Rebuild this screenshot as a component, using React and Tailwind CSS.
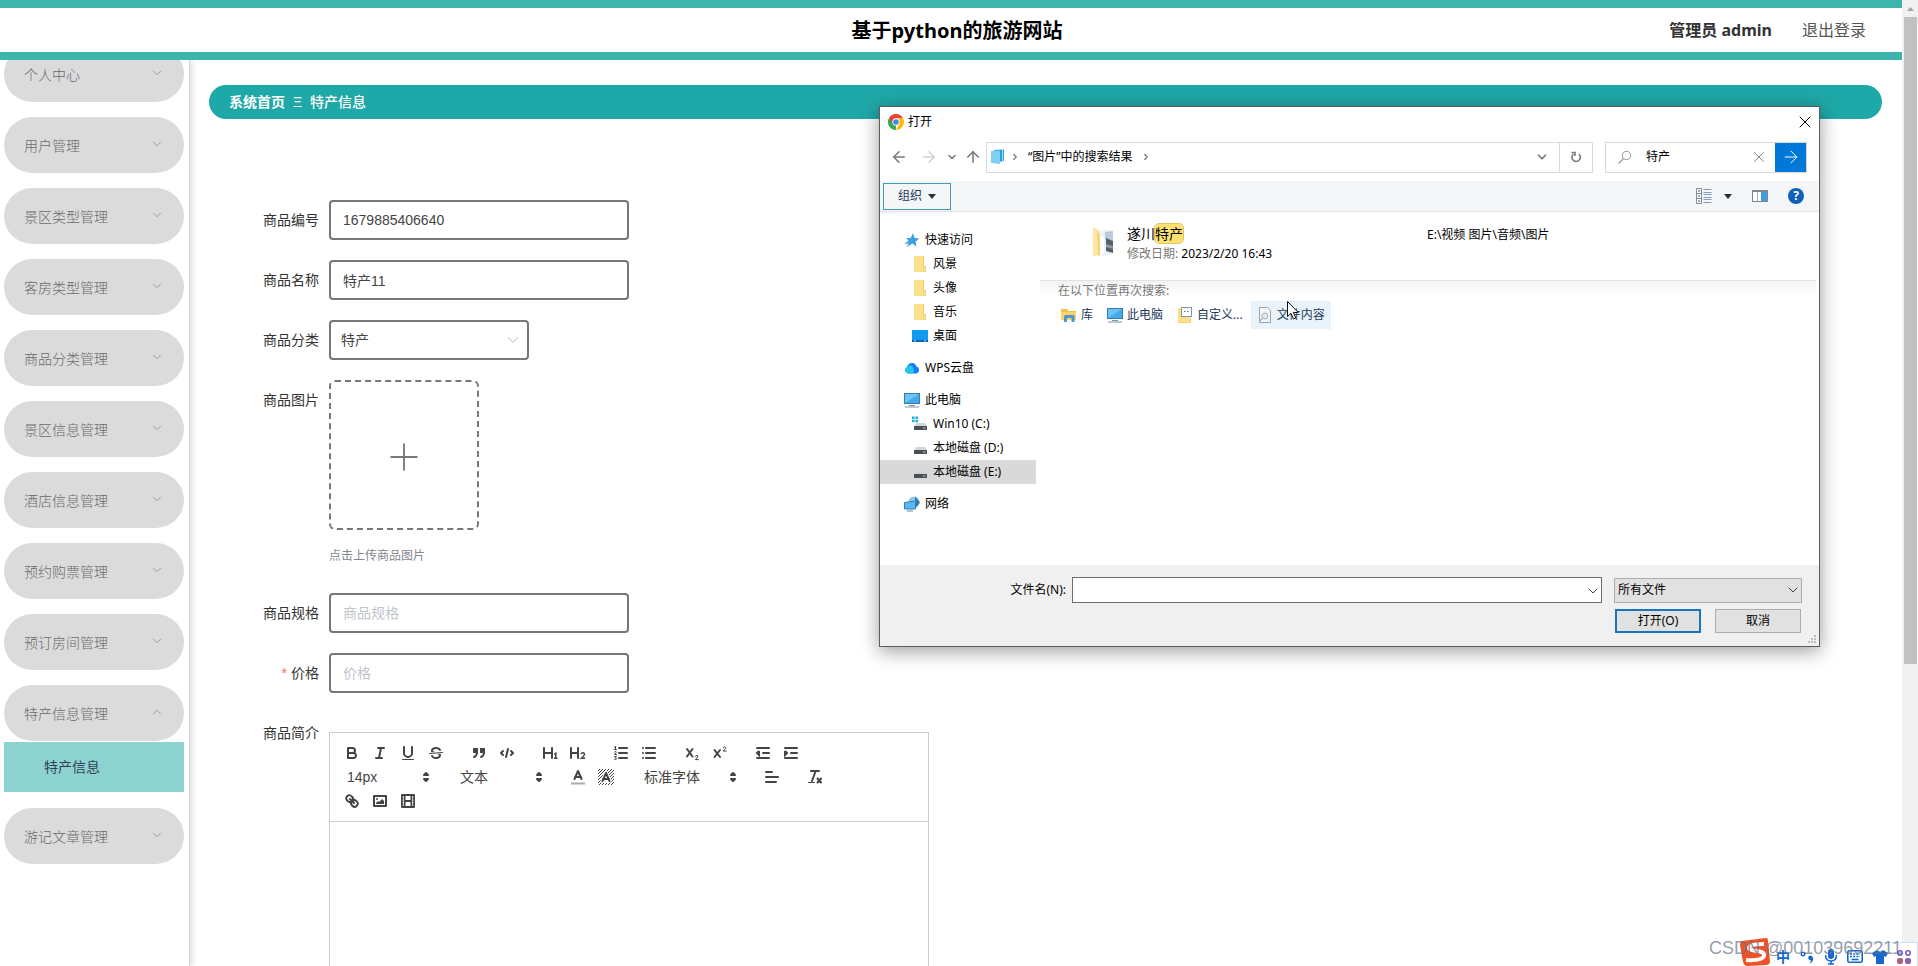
import React, { useState } from "react";
import { ChevronDown, ChevronUp, ChevronRight, ArrowLeft, ArrowRight, ArrowUp, X, Search, Plus } from "lucide-react";

const menus = [
  { name: "个人中心" },
  { name: "用户管理" },
  { name: "景区类型管理" },
  { name: "客房类型管理" },
  { name: "商品分类管理" },
  { name: "景区信息管理" },
  { name: "酒店信息管理" },
  { name: "预约购票管理" },
  { name: "预订房间管理" },
  { name: "特产信息管理", children: ["特产信息"] },
  { name: "游记文章管理" },
];

const Header = () => (
  <header className="relative z-10 flex h-15 shrink-0 items-center border-y-8 border-[#3cb5ad] bg-white pl-3">
    <div className="flex-1 pl-9" />
    <h1 className="pt-0.5 text-xl font-bold text-black">基于python的旅游网站</h1>
    <div className="flex flex-1 items-center justify-end gap-7.5 pr-9 text-base">
      <span className="font-bold text-[#333]">管理员 admin</span>
      <a href="#logout" className="text-[#555]">退出登录</a>
    </div>
  </header>
);

const Sidebar = () => {
  const [opened, setOpened] = useState("特产信息管理");
  return (
    <aside className="w-[190px] shrink-0 border-r border-gray-300 px-1 shadow-[2px_0_6px_rgba(0,0,0,0.15)]">
      {/* the list is scrolled a little under the header */}
      <ul className="-mt-3.5 flex flex-col gap-[15px] pr-px">
        {menus.map((m) => {
          const isOpen = opened === m.name && m.children;
          return (
            <li key={m.name}>
              <button
                onClick={() => setOpened(isOpen ? "" : m.name)}
                className="flex h-14 w-full items-center justify-between rounded-full bg-[#dbdbdb] px-5 pt-0.5 text-sm font-light text-[#6a6a6a]"
              >
                {m.name}
                {isOpen ? (
                  <ChevronUp size={14} strokeWidth={1.5} className="mb-1 text-[#909399]" />
                ) : (
                  <ChevronDown size={14} strokeWidth={1.5} className="mb-1 text-[#909399]" />
                )}
              </button>
              {isOpen &&
                m.children.map((c) => (
                  <a key={c} href="#goods" className="my-px flex h-[50px] items-center bg-[#8dd3d0] pl-10 text-sm text-[#304156]">
                    {c}
                  </a>
                ))}
            </li>
          );
        })}
      </ul>
    </aside>
  );
};

const inputCls =
  "h-10 w-[300px] rounded border-2 border-[#777] bg-white px-3 text-sm text-[#444] outline-none placeholder:text-[#c0c4cc]";

const FormItem = ({ label, id, required, children }) => (
  <div className="flex items-start gap-2.5">
    <label htmlFor={id} className="w-20 shrink-0 text-right text-sm leading-10 text-[#333]">
      {required && <span className="mr-1 text-red-400">*</span>}
      {label}
    </label>
    {children}
  </div>
);

// editor toolbar drawings, 18x18 boxes
const S = "fill-none stroke-[#444] stroke-2 [stroke-linecap:round] [stroke-linejoin:round]";
const T = "fill-none stroke-[#444] stroke-1 [stroke-linecap:round] [stroke-linejoin:round]";
const F = "fill-[#444]";

const icons = {
  bold: (
    <>
      <path className={S} d="M5,4H9.5A2.5,2.5,0,0,1,12,6.5v0A2.5,2.5,0,0,1,9.5,9H5A0,0,0,0,1,5,9V4A0,0,0,0,1,5,4Z" />
      <path className={S} d="M5,9h5.5A2.5,2.5,0,0,1,13,11.5v0A2.5,2.5,0,0,1,10.5,14H5a0,0,0,0,1,0,0V9A0,0,0,0,1,5,9Z" />
    </>
  ),
  italic: (
    <>
      <line className={S} x1="7" x2="13" y1="4" y2="4" />
      <line className={S} x1="5" x2="11" y1="14" y2="14" />
      <line className={S} x1="8" x2="10" y1="14" y2="4" />
    </>
  ),
  underline: (
    <>
      <path className={S} d="M5,3V9a4.012,4.012,0,0,0,4,4H9a4.012,4.012,0,0,0,4-4V3" />
      <rect className={F} height="1" rx="0.5" ry="0.5" width="12" x="3" y="15" />
    </>
  ),
  strike: (
    <>
      <line className={T} x1="15.5" x2="2.5" y1="8.5" y2="9.5" />
      <path className={F} d="M9.007,8C6.542,7.791,6,7.519,6,6.5,6,5.792,7.283,5,9,5c1.571,0,2.765.679,2.969,1.309a1,1,0,0,0,1.9-.617C13.356,4.106,11.354,3,9,3,6.2,3,4,4.538,4,6.5a3.2,3.2,0,0,0,.5,1.843Z" />
      <path className={F} d="M8.984,10C11.457,10.208,12,10.479,12,11.5c0,0.708-1.283,1.5-3,1.5-1.571,0-2.765-.679-2.969-1.309a1,1,0,1,0-1.9.617C4.644,13.894,6.646,15,9,15c2.8,0,5-1.538,5-3.5a3.2,3.2,0,0,0-.5-1.843Z" />
    </>
  ),
  quote: (
    <>
      <rect className="fill-[#444] stroke-[#444] stroke-2" height="3" width="3" x="4" y="5" />
      <rect className="fill-[#444] stroke-[#444] stroke-2" height="3" width="3" x="11" y="5" />
      <path className={S} d="M7,8c0,4.031-3,5-3,5" />
      <path className={S} d="M14,8c0,4.031-3,5-3,5" />
    </>
  ),
  code: (
    <>
      <polyline className={S} points="5 7 3 9 5 11" />
      <polyline className={S} points="13 7 15 9 13 11" />
      <line className={S} x1="10" x2="8" y1="5" y2="13" />
    </>
  ),
  h1: (
    <>
      <path className={S} d="M3,4V14M11,4V14M3,9H11" />
      <path className="fill-none stroke-[#444] stroke-[1.5]" d="M13.2,10.3L14.8,9.2V14.2M13,14.2H16.4" />
    </>
  ),
  h2: (
    <>
      <path className={S} d="M2,4V14M9,4V14M2,9H9" />
      <path className="fill-none stroke-[#444] stroke-[1.5]" d="M12,10Q12.5,8.7 14,8.8Q15.8,9 15.4,10.6Q15,12 12.4,14.2H16.2" />
    </>
  ),
  ordered: (
    <>
      <path className={S} d="M7,4H15M7,9H15M7,14H15" />
      <path className={T} d="M2.5,3L3.5,2.5V5.5M2.5,5.5H4.5M2.5,8C3,7 4.5,7.2 4.3,8.4L2.5,10.5H4.5M2.5,12.6H4.4L3.4,14Q5,14.3 4.2,15.3Q3.4,15.9 2.5,15.3" />
    </>
  ),
  bullet: <path className={S} d="M6,4H15M6,9H15M6,14H15M3,4V4M3,9V9M3,14V14" />,
  sub: (
    <>
      <path className={S} d="M4,5L9.5,12.5M9.5,5L4,12.5" />
      <path className={T} d="M12.4,12.4Q12.8,11.3 14,11.4Q15.3,11.7 14.8,13L12.4,15.6H15.4" />
    </>
  ),
  sup: (
    <>
      <path className={S} d="M3.5,6L9,13M9,6L3.5,13" />
      <path className={T} d="M12.2,3.9Q12.6,2.8 13.8,2.9Q15.1,3.2 14.6,4.5L12.2,7.1H15.2" />
    </>
  ),
  outdent: (
    <>
      <path className={S} d="M3,14H15M3,4H15M9,9H15" />
      <polyline className="fill-[#444] stroke-[#444] stroke-2" points="5 7 5 11 3 9 5 7" />
    </>
  ),
  indent: (
    <>
      <path className={S} d="M3,14H15M3,4H15M9,9H15" />
      <polyline className="fill-[#444] stroke-[#444] stroke-2" points="3 7 3 11 5 9 3 7" />
    </>
  ),
  color: (
    <>
      <line className="stroke-[#aaa] stroke-2" x1="2" x2="16" y1="15.5" y2="15.5" />
      <polyline className={S} points="5.5 11 9 3 12.5 11" />
      <line className={S} x1="11.63" x2="6.38" y1="9" y2="9" />
    </>
  ),
  background: (
    <>
      <path
        className="fill-none stroke-[#444] stroke-1"
        d="M1,3L3,1M1,6L6,1M1,9L9,1M1,12L12,1M1,15L15,1M2,17L17,2M5,17L17,5M8,17L17,8M11,17L17,11M14,17L17,14"
      />
      <path className="fill-white stroke-white stroke-4 [stroke-linejoin:round]" d="M5.5,13L9,5L12.5,13Z" />
      <polyline className={S} points="5.5 13 9 5 12.5 13" />
      <line className={S} x1="11.63" x2="6.38" y1="11" y2="11" />
    </>
  ),
  align: <path className={S} d="M3,9H15M3,14H13M3,4H9" />,
  clean: (
    <>
      <path className={S} d="M5,3H13M6,13L9.5,3.5M11.5,10.5L15,14.5M15,10.5L11.5,14.5" />
      <rect className={F} height="1" rx="0.5" width="7" x="2" y="14" />
    </>
  ),
  link: (
    <>
      <line className={S} x1="7" x2="11" y1="7" y2="11" />
      <path className={S} d="M8.9,4.577a3.476,3.476,0,0,1,.36,4.679A3.476,3.476,0,0,1,4.577,8.9C3.185,7.5,2.035,6.4,4.217,4.217S7.5,3.185,8.9,4.577Z" />
      <path className={S} d="M13.423,9.1a3.476,3.476,0,0,0-4.679-.36,3.476,3.476,0,0,0,.36,4.679c1.392,1.392,2.5,2.542,4.679.36S14.815,10.5,13.423,9.1Z" />
    </>
  ),
  image: (
    <>
      <rect className={S} height="10" width="12" x="3" y="4" />
      <circle className={F} cx="6" cy="7" r="1" />
      <polyline className={F} points="5 12 5 11 7 9 8 10 11 7 13 9 13 12 5 12" />
    </>
  ),
  video: (
    <>
      <rect className={S} height="12" width="12" x="3" y="3" />
      <path className={S} d="M5.5,3V15M12.5,3V15M6,9H12" />
      <path className="stroke-white stroke-1" d="M3.5,5H5M3.5,8H5M3.5,10.5H5M3.5,13H5M13,5H14.5M13,8H14.5M13,10.5H14.5M13,13H14.5" />
    </>
  ),
};

const Tools = ({ names }) => (
  <span className="mr-[15px] flex">
    {names.map((n) => (
      <button key={n} type="button" aria-label={n} className="flex h-6 w-7 items-center justify-center">
        <svg viewBox="0 0 18 18" className="size-[18px]">{icons[n]}</svg>
      </button>
    ))}
  </span>
);

const Picker = ({ value, label, wide }) => (
  <span className={`relative mr-[15px] flex h-6 items-center ${wide ? "w-[108px]" : "w-[98px]"}`}>
    <select aria-label={label} className="w-full appearance-none pl-[9px] text-sm text-[#444] outline-none">
      <option>{value}</option>
    </select>
    <svg viewBox="0 0 18 18" className="pointer-events-none absolute right-px size-[18px]">
      <polygon className="fill-[#444] stroke-[#444] stroke-2 [stroke-linejoin:round]" points="7 11 9 13 11 11 7 11" />
      <polygon className="fill-[#444] stroke-[#444] stroke-2 [stroke-linejoin:round]" points="7 7 9 5 11 7 7 7" />
    </svg>
  </span>
);

const Editor = () => (
  <div className="flex h-[480px] w-[600px] flex-col border border-[#ccc]">
    <div className="border-b border-[#ccc] p-2">
      <div className="flex">
        <Tools names={["bold", "italic", "underline", "strike"]} />
        <Tools names={["quote", "code"]} />
        <Tools names={["h1", "h2"]} />
        <Tools names={["ordered", "bullet"]} />
        <Tools names={["sub", "sup"]} />
        <Tools names={["outdent", "indent"]} />
      </div>
      <div className="flex">
        <Picker value="14px" label="字号" />
        <Picker value="文本" label="标题" />
        <Tools names={["color", "background"]} />
        <Picker value="标准字体" label="字体" wide />
        <Tools names={["align"]} />
        <Tools names={["clean"]} />
      </div>
      <div className="flex">
        <Tools names={["link", "image", "video"]} />
      </div>
    </div>
    <textarea id="intro" className="flex-1 resize-none p-3 text-sm outline-none" />
  </div>
);

const GoodsForm = () => (
  <form className="mt-[81px] ml-[30px] flex flex-col gap-5">
    <FormItem label="商品编号" id="code">
      <input id="code" className={inputCls} defaultValue="1679885406640" />
    </FormItem>
    <FormItem label="商品名称" id="name">
      <input id="name" className={inputCls} defaultValue="特产11" />
    </FormItem>
    <FormItem label="商品分类" id="type">
      <div className="relative">
        <select id="type" className="h-10 w-[200px] appearance-none rounded border-2 border-[#777] bg-white px-2.5 text-sm text-[#444] outline-none">
          <option>特产</option>
        </select>
        <ChevronDown size={20} strokeWidth={1.2} className="pointer-events-none absolute top-2.5 right-1.5 text-[#b4b8c0]" />
      </div>
    </FormItem>
    <FormItem label="商品图片" id="picture">
      <div>
        <button
          type="button"
          id="picture"
          className="flex size-[150px] items-center justify-center rounded-md border-2 border-dashed border-[#777] pt-1 text-[#777]"
        >
          <Plus size={44} strokeWidth={1} />
        </button>
        <p className="mt-[17px] mb-2 text-xs leading-[18px] text-[#83878f]">点击上传商品图片</p>
      </div>
    </FormItem>
    <FormItem label="商品规格" id="spec">
      <input id="spec" className={inputCls} placeholder="商品规格" />
    </FormItem>
    <FormItem label="价格" id="price" required>
      <input id="price" className={inputCls} placeholder="价格" />
    </FormItem>
    <FormItem label="商品简介" id="intro">
      <div className="pt-[19px]">
        <Editor />
      </div>
    </FormItem>
  </form>
);

/* ---------- file dialog ---------- */

const ChromeIcon = () => (
  <svg viewBox="0 0 48 48" className="size-4">
    <path fill="#34a853" d="M24 24L24 48A24 24 0 0 1 3.2 12Z" />
    <path fill="#ea4335" d="M24 13H45.3A24 24 0 0 0 3.2 12L14 30Z" />
    <path fill="#fbbc04" d="M24 13H45.3A24 24 0 0 1 24 48L34 29Z" />
    <circle cx="24" cy="24" r="11" fill="#fff" />
    <circle cx="24" cy="24" r="8.5" fill="#4285f4" />
  </svg>
);

const PcIcon = () => (
  <svg viewBox="0 0 16 16" className="size-4">
    <rect x="0.5" y="1.5" width="15" height="10" fill="#6cc3f7" stroke="#3a7ca8" />
    <path d="M1 11L15 2V11Z" fill="#44aaeb" />
    <path d="M5 13.5H11M1 15H15" stroke="#7d97a6" />
  </svg>
);

const FolderIcon = () => (
  <svg viewBox="0 0 16 16" className="size-4">
    <path d="M2 0H12V10H14V16H2Z" fill="#fbe08a" />
    <path d="M12 0V10H14V16H11.5V9.5H11V0Z" fill="#efc968" />
    <rect x="12" y="10.5" width="1.5" height="5" fill="#fbe08a" />
  </svg>
);

const StarIcon = () => (
  <svg viewBox="0 0 16 16" className="size-4">
    <path d="M9 1L10.5 6L15.5 6.5L11.5 9.5L12.5 14.5L8.3 11.6L3 15L4.5 11H1L4.5 9L2.5 6L6.7 6Z" fill="#3c9fe0" />
    <path d="M0.5 11.5H4.5M2.5 13.5H5" stroke="#8fc4ea" />
  </svg>
);

const DesktopIcon = () => (
  <svg viewBox="0 0 16 16" className="size-4">
    <rect x="0" y="2" width="16" height="12" fill="#0f9bf2" />
    <rect x="0" y="12" width="16" height="2" fill="#0a66ad" />
    <path d="M2 13H4M12 13H14" stroke="#cfe9fb" />
  </svg>
);

const CloudIcon = () => (
  <svg viewBox="0 0 16 16" className="size-4">
    <path d="M4 13.5A3.5 3.5 0 0 1 3 7Q4.5 2.8 8.5 3Q11.5 3.2 12.4 6.5A3.6 3.6 0 0 1 12 13.5Z" fill="#1a7cf5" />
    <path d="M4 13.5A3.5 3.5 0 0 1 3 7Q5 4 8 6Q11 9 9 13.5Z" fill="#22c7ee" />
  </svg>
);

const DiskIcon = ({ win }) => (
  <svg viewBox="0 0 16 16" className="size-4">
    {win && <path d="M0 0.5H2.6V3H0ZM3.4 0.5H6V3H3.4ZM0 3.8H2.6V6.3H0ZM3.4 3.8H6V6.3H3.4Z" fill="#22b0e0" />}
    <path d="M4 7H13L15 10.5H2Z" fill="#d2d5d7" />
    <rect x="2" y="10" width="13" height="4" rx="0.5" fill="#4b4f52" />
    <path d="M11 12H13.5" stroke="#b9c4c4" />
  </svg>
);

const NetIcon = () => (
  <svg viewBox="0 0 16 16" className="size-4">
    <circle cx="10" cy="6" r="5.5" fill="#8cc6e8" />
    <path d="M11 0.5L16 6.5L11 13Z" fill="#2d7cae" />
    <path d="M0.5 6.5L11.5 5V13H0.5Z" fill="#56b9f1" stroke="#3480b0" />
    <path d="M3 15H9" stroke="#5a8fae" />
  </svg>
);

const LibraryIcon = () => (
  <svg viewBox="0 0 16 16" className="size-4">
    <path d="M0 2H6L7.5 4H15V13H0Z" fill="#f3bf48" />
    <path d="M0 5H15V13H0Z" fill="#fbd467" />
    <path d="M3 15V9.5Q3 8 4.5 8H12Q13.5 8 13.5 9.5V15H10.5V11H6V15Z" fill="#4a96d6" />
  </svg>
);

const CustomIcon = () => (
  <svg viewBox="0 0 16 16" className="size-4">
    <path d="M1 1H4V15H13V11H14V16H1Z" fill="#f3cf6d" />
    <rect x="1" y="1" width="12" height="14" fill="#fbe08a" />
    <rect x="4.5" y="0.5" width="10" height="9" fill="#fff" stroke="#7f95a8" />
    <path d="M7 4.5H8.5M10 4.5H11.5" stroke="#3e78c0" />
  </svg>
);

const DocIcon = () => (
  <svg viewBox="0 0 16 16" className="size-4">
    <path d="M2.5 0.5H10.5L13.5 3.5V15.5H2.5Z" fill="#f4f6f8" stroke="#9aa3ab" />
    <circle cx="7.8" cy="9" r="3" fill="#dce9f2" stroke="#a6b4bf" />
    <path d="M5.5 11.2L2.5 14.5" stroke="#a6b4bf" strokeWidth="1.5" />
  </svg>
);

const tree = [
  [
    { name: "快速访问", icon: <StarIcon /> },
    { name: "风景", icon: <FolderIcon />, sub: true },
    { name: "头像", icon: <FolderIcon />, sub: true },
    { name: "音乐", icon: <FolderIcon />, sub: true },
    { name: "桌面", icon: <DesktopIcon />, sub: true },
  ],
  [{ name: "WPS云盘", icon: <CloudIcon /> }],
  [
    { name: "此电脑", icon: <PcIcon /> },
    { name: "Win10 (C:)", icon: <DiskIcon win />, sub: true },
    { name: "本地磁盘 (D:)", icon: <DiskIcon />, sub: true },
    { name: "本地磁盘 (E:)", icon: <DiskIcon />, sub: true, active: true },
  ],
  [{ name: "网络", icon: <NetIcon /> }],
];

const places = [
  { name: "库", icon: <LibraryIcon /> },
  { name: "此电脑", icon: <PcIcon /> },
  { name: "自定义...", icon: <CustomIcon /> },
  { name: "文件内容", icon: <DocIcon />, hover: true },
];

const Caret = () => (
  <svg viewBox="0 0 8 5" className="h-[5px] w-2">
    <path d="M0 0H8L4 5Z" fill="#2d2d3a" />
  </svg>
);

const Cursor = () => (
  <svg viewBox="0 0 12 19" className="absolute top-0 left-9 h-[19px] w-3">
    <path d="M0.5 0.5V15.5L4 12.3L6.5 18L8.8 17L6.4 11.5H11.3Z" fill="#fff" stroke="#111" />
  </svg>
);

const FileDialog = () => (
  <section
    role="dialog"
    aria-label="打开"
    className="absolute top-[106px] left-[879px] z-20 flex w-[941px] flex-col border border-[#5c5c5c] bg-white text-xs text-black shadow-[0_4px_18px_rgba(0,0,0,0.4)]"
  >
    <div className="flex h-[30px] items-center gap-1 pr-1 pl-2">
      <ChromeIcon />
      <span className="flex-1">打开</span>
      <button aria-label="关闭"><X size={20} strokeWidth={1.2} /></button>
    </div>

    <div className="flex h-11 items-center pr-3 pb-1 pl-2.5 text-[#777]">
      <button aria-label="后退"><ArrowLeft size={18} strokeWidth={2} /></button>
      <button aria-label="前进" className="ml-3 text-[#d0d0d0]"><ArrowRight size={18} strokeWidth={1.8} /></button>
      <button aria-label="最近" className="ml-2"><ChevronDown size={12} strokeWidth={3} /></button>
      <button aria-label="上移" className="ml-1.5"><ArrowUp size={18} strokeWidth={2} /></button>
      <div className="ml-1 flex h-[31px] flex-1 items-center border border-[#d9d9d9] pl-[3px]">
        <svg viewBox="0 0 16 16" className="size-4">
          <path d="M4 1L14 0.5V12L4 14Z" fill="#2b9fdc" />
          <path d="M1 2L10 1.5V15L1 14Z" fill="#7fd0f5" />
          <path d="M12.5 1V13" stroke="#a7ddf7" />
        </svg>
        <ChevronRight size={10} strokeWidth={3} className="ml-1" />
        <span className="ml-2 text-black">“图片”中的搜索结果</span>
        <ChevronRight size={10} strokeWidth={3} className="ml-2" />
        <button aria-label="展开" className="ml-auto px-2.5"><ChevronDown size={14} strokeWidth={3} /></button>
        <button aria-label="刷新" className="flex h-full w-[33px] items-center justify-center border-l border-[#d9d9d9]">
          <svg viewBox="0 0 12 12" className="size-3">
            <path d="M9 3.2A4.2 4.2 0 1 1 3.5 3M1.5 1.5H5V5" fill="none" stroke="currentColor" strokeWidth="1.6" />
          </svg>
        </button>
      </div>
      <div className="ml-3 flex h-[31px] w-[202px] items-center border border-[#d9d9d9] pl-3">
        <svg viewBox="0 0 14 14" className="size-3.5">
          <path d="M0.5 13.5L5.5 8.5" stroke="#999" strokeWidth="1.2" />
          <circle cx="8.5" cy="5.5" r="4.2" fill="none" stroke="#999" />
        </svg>
        <input aria-label="搜索" defaultValue="特产" className="ml-3.5 w-0 flex-1 text-black outline-none" />
        <button aria-label="清除"><X size={18} strokeWidth={1.2} /></button>
        <button aria-label="转到" className="ml-[7px] flex h-full w-[31px] items-center justify-center bg-[#0078d7] text-white">
          <ArrowRight size={20} strokeWidth={1.2} />
        </button>
      </div>
    </div>

    <div className="flex h-[31px] items-center border-b border-[#e2e3e4] bg-[#f4f6f7] px-[3px] text-[#1e395b]">
      <button className="flex h-[27px] w-[68px] items-center justify-center gap-1.5 border border-[#3f9dbb]">
        组织 <Caret />
      </button>
      <button aria-label="视图" className="ml-auto flex items-center gap-3">
        <svg viewBox="0 0 16 16" className="size-4">
          <path d="M0.5 0.5H5.5V15.5H0.5ZM0.5 5.5H5.5M0.5 10.5H5.5" fill="none" stroke="#8a8f96" />
          <path d="M2 3H4M2 8H4M2 13H4" stroke="#6a6f76" />
          <path d="M7.5 1.5H15.5M7.5 4.5H15.5M7.5 6.5H15.5M7.5 9.5H15.5M7.5 11.5H15.5M7.5 14.5H15.5" stroke="#7f9bc0" />
        </svg>
        <Caret />
      </button>
      <button aria-label="预览窗格" className="ml-5">
        <svg viewBox="0 0 16 12" className="h-3 w-4">
          <rect x="0.5" y="0.5" width="15" height="11" fill="#fff" stroke="#7b868f" />
          <path d="M0 1.5H16" stroke="#7b868f" />
          <rect x="9" y="2" width="6" height="9" fill="#3f9be0" />
          <path d="M5.5 2V11" stroke="#9fb0bb" />
        </svg>
      </button>
      <button aria-label="帮助" className="mr-3 ml-5 flex size-4 items-center justify-center rounded-full bg-[#1160b8] font-bold text-white">?</button>
    </div>

    <div className="flex h-[353px]">
      <nav className="mt-4 flex w-[156px] flex-col gap-2">
        {tree.map((group, i) => (
          <ul key={i}>
            {group.map((n) => (
              <li key={n.name}>
                <button
                  className={`flex h-6 w-full items-center gap-[5px] text-left ${n.sub ? "pl-8" : "pl-6"} ${n.active ? "bg-[#d9d9d9]" : ""}`}
                >
                  {n.icon}
                  {n.name}
                </button>
              </li>
            ))}
          </ul>
        ))}
      </nav>

      <div className="ml-1 flex-1 pr-[3px]">
        <div className="flex h-[68px] items-start pt-[11px] pl-[51px]">
          <svg viewBox="0 0 26 32" className="mt-[3px] h-8 w-[26px]">
            <path d="M8 4H22V28L9 30Z" fill="#edf2f7" />
            <path d="M14 6L22 5V15L14 13Z" fill="#b9cbdc" />
            <path d="M15 12L22 15V27L15 25Z" fill="#56606a" />
            <path d="M15 18L22 20V23L15 21Z" fill="#8d99a4" />
            <path d="M2 2L6 3L9 9V29L2 30Z" fill="#fbe7a0" />
            <path d="M6 3L9 9V29L7 30Z" fill="#f3d37a" />
            <path d="M9 9L13 12V27L9 30Z" fill="#fff" />
          </svg>
          <div className="ml-2.5 w-[300px]">
            <p className="text-sm leading-[21px]">
              遂川<mark className="rounded bg-[#fde271] outline outline-[#e4c55c]">特产</mark>
            </p>
            <p className="leading-5"><span className="text-[#777]">修改日期:</span> 2023/2/20 16:43</p>
          </div>
          <p className="leading-6">E:\视频 图片\音频\图片</p>
        </div>
        <div className="border-t border-[#e3e3e3] bg-linear-to-b from-[#f3f3f3] to-white to-[14px] pl-[15px]">
          <p className="px-[3px] leading-5 text-[#777]">在以下位置再次搜索:</p>
          <div className="flex">
            {places.map((p) => (
              <button
                key={p.name}
                className={`relative mr-0.5 flex h-7 items-center gap-1 px-1.5 text-[#1e395b] ${p.hover ? "bg-[#e8f3fc]" : ""}`}
              >
                {p.icon}
                {p.name}
                {p.hover && <Cursor />}
              </button>
            ))}
          </div>
        </div>
      </div>
    </div>

    <div className="relative bg-[#f0f0f0] px-[17px] pt-3 pb-[13px]">
      <div className="flex items-center">
        <label htmlFor="filename" className="w-[175px] pr-1.5 text-right">文件名(N):</label>
        <div className="relative flex-1">
          <input id="filename" className="h-[26px] w-full border border-[#6f6f6f] bg-white px-2 outline-none" />
          <ChevronDown size={16} strokeWidth={1.5} className="pointer-events-none absolute top-1.5 right-px text-[#444]" />
        </div>
        <div className="relative ml-3 w-[188px]">
          <select aria-label="文件类型" className="h-[25px] w-full appearance-none border border-[#adadad] bg-[#e1e1e1] pl-[3px] outline-none">
            <option>所有文件</option>
          </select>
          <ChevronDown size={16} strokeWidth={1.5} className="pointer-events-none absolute top-1 right-px text-[#444]" />
        </div>
      </div>
      <div className="mt-1.5 flex justify-end gap-3.5 pr-px">
        <button className="h-6 w-[86px] border-2 border-[#1874bd] bg-[#e1e1e1]">打开(O)</button>
        <button className="h-6 w-[86px] border border-[#adadad] bg-[#e1e1e1]">取消</button>
      </div>
      <svg viewBox="0 0 9 9" className="absolute right-0.5 bottom-0.5 size-[9px]">
        <path d="M6 0H8V2H6ZM6 3H8V5H6ZM6 6H8V8H6ZM3 3H5V5H3ZM3 6H5V8H3ZM0 6H2V8H0Z" fill="#bdbdbd" />
      </svg>
    </div>
  </section>
);

const ImeBar = () => (
  <div className="absolute right-0 bottom-0 z-30 flex h-[27px] items-end text-[#1268cf]">
    <svg viewBox="0 0 30 28" className="h-7 w-[30px]">
      <path d="M2 3L26 0Q28 0 28 3L30 23Q30 27 26 27L8 28Q4 28 3 24L0 7Q0 3 2 3Z" fill="#ee5328" />
      <path d="M24 6Q9 6 9 10Q9 12 17 13Q25 14 24 18Q22 23 6 22" fill="none" stroke="#fff" strokeWidth="4" />
    </svg>
    <div className="flex h-6 items-center gap-[9px] border-t border-r border-[#cfe0f2] bg-white pt-1 pr-1.5 pl-1.5">
      <span className="text-sm font-bold">中</span>
      <svg viewBox="0 0 16 16" className="size-4">
        <circle cx="4" cy="5" r="1.8" fill="none" stroke="currentColor" strokeWidth="1.4" />
        <path d="M11 6.5A2.2 2.2 0 1 0 12 11Q12 13 10 14.5Q14.5 13.5 14 9Q13 6 11 6.5Z" fill="currentColor" />
      </svg>
      <svg viewBox="0 0 14 16" className="h-4 w-3.5">
        <rect x="4" y="0" width="6" height="10" rx="3" fill="currentColor" />
        <path d="M1.5 6Q1.5 12 7 12Q12.5 12 12.5 6M7 12V15M4 15H10" fill="none" stroke="currentColor" strokeWidth="1.5" />
      </svg>
      <svg viewBox="0 0 16 13" className="h-[13px] w-4">
        <rect x="0.8" y="0.8" width="14.4" height="11.4" rx="1.5" fill="none" stroke="currentColor" strokeWidth="1.6" />
        <path d="M3 4H13M3 6.5H13" stroke="currentColor" strokeWidth="1.6" strokeDasharray="2 1.2" />
        <path d="M4.5 9.5H11.5" stroke="currentColor" strokeWidth="1.6" />
      </svg>
      <svg viewBox="0 0 16 14" className="h-3.5 w-4">
        <path d="M0 3L5 0Q8 3 11 0L16 3L14 7L12 6V14H4V6L2 7Z" fill="currentColor" />
      </svg>
      <svg viewBox="0 0 14 14" className="size-3.5">
        <circle cx="3" cy="3" r="2.2" fill="none" stroke="#6a5acd" strokeWidth="1.6" />
        <circle cx="11" cy="3" r="2.2" fill="none" stroke="#7a5cc4" strokeWidth="1.6" />
        <rect x="0" y="8" width="6" height="6" rx="2" fill="#b0607e" />
        <rect x="8" y="8" width="6" height="6" rx="2" fill="#8d62a8" />
      </svg>
    </div>
  </div>
);

const App = () => (
  <div className="relative flex h-screen overflow-hidden bg-white font-['Noto_Sans','Noto_Sans_CJK_SC',sans-serif]">
    <div className="flex min-w-0 flex-1 flex-col">
      <Header />
      <div className="flex min-h-0 flex-1">
        <Sidebar />
        <main className="min-w-0 flex-1 overflow-hidden pt-[25px] pr-5 pl-[19px] font-['Liberation_Sans','Noto_Sans_CJK_SC',sans-serif]">
          <nav className="flex h-[34px] items-center gap-2 rounded-full bg-[#1fa8a8] px-5 text-sm text-white">
            <a href="#home" className="font-bold">系统首页</a>
            <span>Ξ</span>
            <span className="font-medium">特产信息</span>
          </nav>
          <GoodsForm />
        </main>
      </div>
    </div>

    {/* page scrollbar */}
    <div className="flex w-4 shrink-0 flex-col items-center bg-[#f1f1f1]">
      <svg viewBox="0 0 15 17" className="h-[17px] w-[15px]">
        <path d="M4 11L7.5 7L11 11Z" fill="#a3a3a3" />
      </svg>
      <div className="h-[67%] w-[13px] bg-[#c1c1c1]" />
    </div>

    <FileDialog />
    <ImeBar />
    <span className="pointer-events-none absolute right-4 bottom-1.5 z-40 font-['Liberation_Sans',sans-serif] text-lg leading-6 text-gray-500/70">
      CSDN @001039692211
    </span>
  </div>
);

export default App;
